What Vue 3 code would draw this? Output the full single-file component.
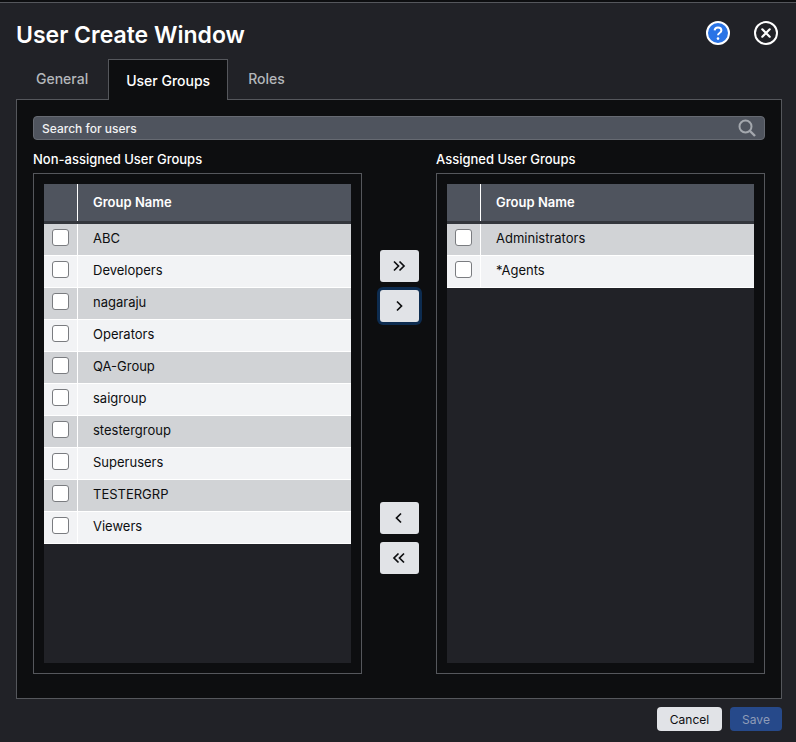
<template>
  <div class="modal">
    <!-- Header -->
    <header class="head">
      <h1>User Create Window</h1>
      <div class="head-icons">
        <button class="round help" aria-label="Help">
          <svg width="24" height="24" viewBox="0 0 24 24">
            <circle cx="12" cy="12" r="11" fill="#2a74e6" stroke="#fff" stroke-width="2" />
            <path d="M8.6 9.4c.2-1.9 1.600-2.900 3.400-2.900 1.900 0 3.400 1.100 3.400 2.800 0 1.400-.8 2-1.900 2.700-1 .6-1.500 1.100-1.500 2.300" fill="none" stroke="#fff" stroke-width="2" />
            <circle cx="12" cy="17.600" r="1.300" fill="#fff" />
          </svg>
        </button>
        <button class="round" aria-label="Close">
          <svg width="24" height="24" viewBox="0 0 24 24">
            <circle cx="12" cy="12" r="11" fill="none" stroke="#fff" stroke-width="2" />
            <path d="M8.300 8.300l7.400 7.400M15.700 8.300l-7.400 7.400" stroke="#fff" stroke-width="2.200" stroke-linecap="round" />
          </svg>
        </button>
      </div>
    </header>

    <!-- Tabs -->
    <nav class="tabs">
      <a v-for="tab in tabs" :key="tab" class="tab" :class="{ active: tab === 'User Groups' }">{{ tab }}</a>
    </nav>

    <section class="panel">
      <div class="search">
        <span>Search for users</span>
        <svg width="18" height="18" viewBox="0 0 18 18" fill="none" stroke="#a4a8ae">
          <circle cx="7.500" cy="7.500" r="6" stroke-width="2" />
          <path d="M12 12l5 5" stroke-width="2.400" />
        </svg>
      </div>

      <div class="columns">
        <div class="col">
          <h2>Non-assigned User Groups</h2>
          <div class="box">
            <div class="table">
              <div class="row header">
                <div class="check-cell"></div>
                <div class="name-cell">Group Name</div>
              </div>
              <div v-for="group in available" :key="group" class="row">
                <div class="check-cell"><input type="checkbox" /></div>
                <div class="name-cell">{{ group }}</div>
              </div>
            </div>
          </div>
        </div>

        <div class="mover">
          <div class="mover-group">
            <button class="move">
              <svg width="14" height="12" viewBox="0 0 14 12"><path d="M2 1.500L6.500 6 2 10.500M7.500 1.500L12 6l-4.500 4.500" /></svg>
            </button>
            <button class="move focused">
              <svg width="14" height="12" viewBox="0 0 14 12"><path d="M5 1.500L9.500 6 5 10.500" /></svg>
            </button>
          </div>
          <div class="mover-group">
            <button class="move">
              <svg width="14" height="12" viewBox="0 0 14 12"><path d="M9 1.500L4.500 6 9 10.500" /></svg>
            </button>
            <button class="move">
              <svg width="14" height="12" viewBox="0 0 14 12"><path d="M6.500 1.500L2 6l4.500 4.500M12 1.500L7.500 6l4.500 4.500" /></svg>
            </button>
          </div>
        </div>

        <div class="col">
          <h2>Assigned User Groups</h2>
          <div class="box">
            <div class="table">
              <div class="row header">
                <div class="check-cell"></div>
                <div class="name-cell">Group Name</div>
              </div>
              <div v-for="group in assigned" :key="group" class="row">
                <div class="check-cell"><input type="checkbox" /></div>
                <div class="name-cell">{{ group }}</div>
              </div>
            </div>
          </div>
        </div>
      </div>
    </section>

    <footer class="foot">
      <button class="btn cancel">Cancel</button>
      <button class="btn save">Save</button>
    </footer>
  </div>
</template>

<script setup>
const tabs = ['General', 'User Groups', 'Roles']

const available = [
  'ABC',
  'Developers',
  'nagaraju',
  'Operators',
  'QA-Group',
  'saigroup',
  'stestergroup',
  'Superusers',
  'TESTERGRP',
  'Viewers',
]

const assigned = ['Administrators', '*Agents']
</script>

<style>
html,
body {
  margin: 0;
  background: #212227;
}
</style>

<style scoped>
.modal {
  width: 796px;
  height: 742px;
  box-sizing: border-box;
  padding: 2px 14px 0 16px;
  background: #212227;
  border-top: 0;
  font-family: Inter, 'Noto Sans', sans-serif;
  color: #fff;
  box-shadow: inset 0 2px 0 #0d0e10, inset 0 3px 0 #55575c;
  overflow: hidden;
}

.head {
  height: 57px;
  display: flex;
  align-items: flex-start;
  justify-content: space-between;
}

h1 {
  margin: 18px 0 0;
  font-size: 23px;
  line-height: 30px;
  font-weight: 600;
}

.head-icons {
  display: flex;
  gap: 24px;
  margin: 19px 4px 0 0;
}

.round {
  padding: 0;
  width: 24px;
  height: 24px;
  border: 0;
  background: none;
  display: block;
}

.tabs {
  display: flex;
  height: 41px;
  margin-bottom: -1px;
  position: relative;
}

.tab {
  box-sizing: border-box;
  height: 41px;
  padding: 11px 20px 0;
  font-size: 14px;
  line-height: 17px;
  font-weight: 500;
  color: #b4b7bb;
}

.tab.active {
  width: 120px;
  margin-left: 0;
  padding: 12px 0 0;
  text-align: center;
  color: #fff;
  background: #0d0e10;
  border: 1px solid #55575c;
  border-bottom: 0;
}

.panel {
  box-sizing: border-box;
  height: 600px;
  padding: 16px;
  background: #0d0e10;
  border: 1px solid #55575c;
}

.search {
  box-sizing: border-box;
  height: 24px;
  padding: 0 8px;
  display: flex;
  align-items: center;
  justify-content: space-between;
  background: #4f545e;
  border: 1px solid #666a72;
  border-radius: 4px;
  font-size: 12px;
  font-weight: 500;
  color: #f1f2f3;
}

.columns {
  display: flex;
  margin-top: 11px;
}

.col {
  width: 329px;
}

h2 {
  margin: 0;
  height: 22px;
  font-size: 13px;
  line-height: 17px;
  font-weight: 500;
}

.box {
  box-sizing: border-box;
  height: 501px;
  padding: 10px;
  border: 1px solid #55575c;
}

.table {
  height: 479px;
  background: #212227;
}

.row {
  display: flex;
  height: 32px;
  box-sizing: border-box;
  background: #d1d3d6;
  color: #0d0e10;
  border-bottom: 1px solid #fff;
}

.row:nth-child(odd) {
  background: #f2f3f5;
}

.row.header {
  height: 40px;
  background: #4f545e;
  border-bottom: 3px solid #33363c;
  color: #fff;
}

.check-cell {
  width: 34px;
  flex: none;
  box-sizing: border-box;
  border-right: 1px solid #fff;
  display: flex;
  justify-content: center;
  padding-top: 5px;
}

.name-cell {
  padding-left: 15px;
  font-size: 13px;
  line-height: 28px;
}

.header .name-cell {
  font-weight: 600;
  line-height: 36px;
}

input[type='checkbox'] {
  appearance: none;
  margin: 0;
  width: 17px;
  height: 17px;
  background: #fff;
  border: 1px solid #7a7c80;
  border-radius: 3px;
}

.mover {
  width: 74px;
  flex: none;
  box-sizing: border-box;
  padding: 99px 0 100px;
  display: flex;
  flex-direction: column;
  align-items: center;
  justify-content: space-between;
}

.mover-group {
  display: flex;
  flex-direction: column;
  gap: 8px;
}

.move {
  width: 39px;
  height: 32px;
  padding: 0;
  border: 0;
  border-radius: 3px;
  background: #e1e3e7;
  display: flex;
  align-items: center;
  justify-content: center;
}

.move svg path {
  fill: none;
  stroke: #0d0e10;
  stroke-width: 1.700;
}

.move.focused {
  box-shadow: 0 0 0 3px #0d2c50;
}

.foot {
  display: flex;
  justify-content: flex-end;
  gap: 8px;
  margin-top: 8px;
}

.btn {
  height: 24px;
  padding: 0;
  border: 0;
  border-radius: 4px;
  font-family: inherit;
  font-size: 12px;
}

.cancel {
  width: 65px;
  background: #e1e3e7;
  color: #0d0e10;
}

.save {
  width: 52px;
  background: #26498a;
  color: #8f9cb8;
}
</style>
